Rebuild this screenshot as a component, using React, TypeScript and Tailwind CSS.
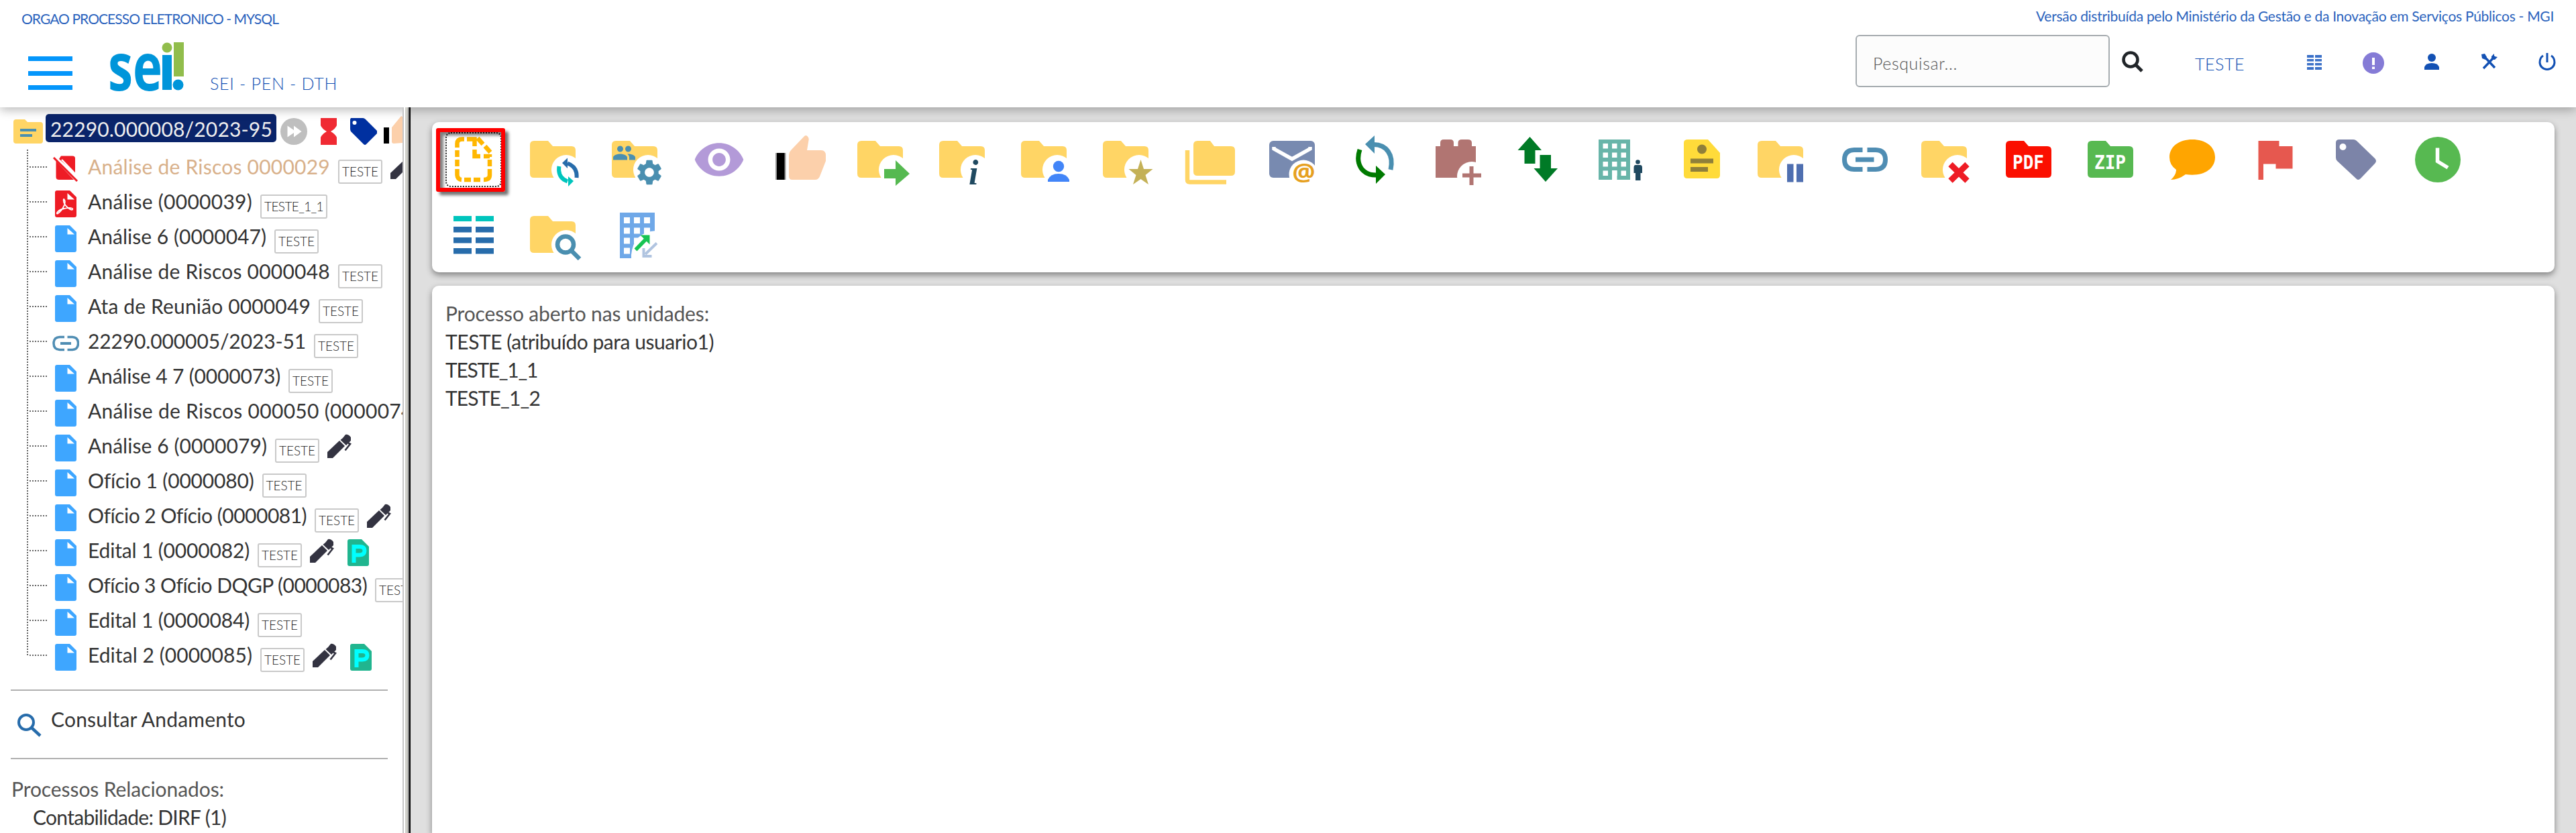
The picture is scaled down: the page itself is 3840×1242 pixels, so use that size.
import { useLayoutEffect, useRef, useState } from "react";
import type { ReactNode } from "react";
import { MdSettings, MdGroup, MdVisibility } from "react-icons/md";

/* Text run whose tracking is adjusted so that it fills a given width. */
function Run({ w, className = "", children }: { w: number; className?: string; children: string }) {
  const ref = useRef<HTMLSpanElement>(null);
  const [tracking, setTracking] = useState(0);
  useLayoutEffect(() => {
    if (ref.current) setTracking((w - ref.current.getBoundingClientRect().width) / children.length);
  }, []);
  return (
    <span ref={ref} className={`whitespace-pre shrink-0 ${className}`} style={{ letterSpacing: tracking }}>
      {children}
    </span>
  );
}

const FOLDER = "M16 20H37L44 28H72Q78 28 78 34V75H16Q10 75 10 69V26Q10 20 16 20Z";
const FOLDER_TYPE = "M20 20H41L48 28H76Q82 28 82 34V69Q82 75 76 75H20Q14 75 14 69V26Q14 20 20 20Z";
const STEEL = "#4a8fb0";

function Icon({ children }: { children: ReactNode }) {
  return (
    <svg viewBox="0 0 96 96" className="block size-[96px] shrink-0 overflow-visible">
      {children}
    </svg>
  );
}

function FolderIcon({ children }: { children: ReactNode }) {
  return (
    <Icon>
      <path d={FOLDER} fill="#ffd565" />
      <circle cx="64" cy="63" r="22" fill="#fff" />
      <rect x="46" y="62" width="40" height="26" fill="#fff" />
      {children}
    </Icon>
  );
}

function Windows({ xs, ys, s }: { xs: number[]; ys: number[]; s: number }) {
  return (
    <>
      {ys.map((y, j) => xs.map((x, i) => <rect key={`${i}-${j}`} x={x} y={y} width={s} height={s} fill="#fff" />))}
    </>
  );
}

function Toolbar() {
  return (
    <div className="flex h-[224px] flex-wrap content-start gap-x-[26px] gap-y-4 rounded-[10px] bg-white pl-[14px] pr-[80px] pt-2 shadow-[0_4px_10px_rgba(0,0,0,0.42)]">
      <div className="relative">
        <Icon>
          <g fill="none" stroke="#ffb700" strokeWidth="6.500">
            <path d="M23.5 30V24Q23.5 17.500 31 17.500H34" />
            <path d="M38 17.500H49.500V28M49.500 33V43H58M63 43H72M54 16L62 25M65 28L73 37" />
            <path d="M23.500 34V44M23.500 48V58M23.500 62V71Q24 77.500 30 78" />
            <path d="M72 40V44M72 48V58M72 62V71Q72 78 63 78M34 78H44M48 78H58" />
          </g>
        </Icon>
        <div className="absolute left-[6px] top-[7px] h-[82px] w-[84px] rounded-[8px] border-2 border-dotted border-[#222]" />
        <div className="absolute -left-2 top-px h-[95px] w-[103px] rounded-[3px] border-[6px] border-[#ff0000] shadow-[5px_5px_4px_rgba(0,0,0,0.55),inset_5px_5px_4px_rgba(0,0,0,0.5)]" />
      </div>

      <FolderIcon>
        <path d="M79.500 75Q81 59 66 53.500" fill="none" stroke="#276cab" strokeWidth="6" />
        <path d="M58 53L66 45.500V61Z" fill="#276cab" />
        <path d="M53.500 58Q51 75 66 80.500" fill="none" stroke="#00c5bd" strokeWidth="6" />
        <path d="M75 80L67 73V88Z" fill="#00c5bd" />
      </FolderIcon>

      <FolderIcon>
        <MdGroup x="10.500" y="20" size={36} color={STEEL} />
        <circle cx="66" cy="67" r="22" fill="#fff" />
        <MdSettings x="43.200" y="44.200" size={45.6} color={STEEL} />
      </FolderIcon>

      <Icon>
        <MdVisibility x="8.400" y="8.400" size={79.2} color="#b39ad8" />
      </Icon>

      <Icon>
        <rect x="10" y="38" width="15.500" height="40" fill="#999" />
        <rect x="12" y="38" width="11.500" height="40" />
        <path d="M35 78Q30 78 30 73V41Q30 37 33 34L53 13Q55.500 11 57.500 13L59 15Q60 17 59.500 19L57 34H78Q85 34 85 42V50L76 73Q74 78 69 78Z" fill="#fcd0ab" />
      </Icon>

      <FolderIcon>
        <path d="M50 62H67V49L88 69L67 87V76H50Z" fill="#55b950" />
      </FolderIcon>

      <FolderIcon>
        <text x="54" y="85" className="font-['Liberation_Serif'] text-[52px] font-bold italic" fill="#1f4960">i</text>
      </FolderIcon>

      <FolderIcon>
        <circle cx="66" cy="58" r="8.200" fill="#4285f8" />
        <path d="M50 81V78Q54 69 66 69Q78 69 82 78V81Z" fill="#4285f8" />
      </FolderIcon>

      <FolderIcon>
        <path d="M66.500 48L71 62H84.500L73.500 71L78 85L66.500 77L55 85L59.500 71L48.500 62H62Z" fill="#c4b157" />
      </FolderIcon>

      <Icon>
        <path d="M29 20H48L54 28H79Q85 28 85 34V66Q85 72 79 72H29Q23 72 23 66V26Q23 20 29 20Z" fill="#ffd565" />
        <path d="M14 34V78Q14 81.500 17.500 81.500H72" fill="none" stroke="#ffd565" strokeWidth="6.500" />
      </Icon>

      <Icon>
        <rect x="14" y="20" width="68" height="55" rx="6" fill="#788ab0" />
        <path d="M21 29V32L48 47L75 32V29" fill="none" stroke="#fff" strokeWidth="5.500" />
        <circle cx="65" cy="70" r="21.500" fill="#fff" />
        <rect x="46" y="66" width="40" height="20" fill="#fff" />
        <text x="48.500" y="80" textLength="34" lengthAdjust="spacingAndGlyphs" className="font-['Noto_Sans'] text-[36px] font-bold" fill="#e6a020">@</text>
      </Icon>

      <Icon>
        <path d="M48 25.500C66 25.500 78 40 73 63" fill="none" stroke={STEEL} strokeWidth="7" />
        <path d="M35 25L49 12V39Z" fill={STEEL} />
        <path d="M27 33C20 54 30 71 51 71" fill="none" stroke="#007a00" strokeWidth="7" />
        <path d="M65 70L51 57V84Z" fill="#007a00" />
      </Icon>

      <Icon>
        <path d="M18 28H25V23Q25 18 30 18H40Q45 18 45 23V28H51.500V23Q51.500 18 57 18H66Q72 18 72 23V28H78V75H18Z" fill="#b17572" />
        <circle cx="72" cy="73" r="22" fill="#fff" />
        <path d="M58 71.500H86M71.500 58V86" stroke="#b17572" strokeWidth="6" />
      </Icon>

      <Icon>
        <path d="M36.500 14L54 34H44.500V54H28.500V34H18.500ZM51.500 41H68V61H78L60 81L42.500 61H51.500Z" fill="#007a26" />
      </Icon>

      <Icon>
        <rect x="17" y="18" width="47" height="60" fill="#68b5a9" />
        <Windows xs={[23.5, 37, 50.5]} ys={[24, 37.5, 51, 64.5]} s={7.5} />
        <rect x="37" y="64" width="7.500" height="14" fill="#fff" />
        <circle cx="75.500" cy="51.500" r="3.300" fill="#1f4960" />
        <path d="M72 56H79Q82 56 82 60V68H79.500V79H72V68H69.500V60Q69.500 56 72 56Z" fill="#1f4960" />
      </Icon>

      <Icon>
        <path d="M28 18H58L76 38V71Q76 76 71 76H27Q22 76 22 71V23Q22 18 28 18Z" fill="#ffdb3a" />
        <circle cx="49" cy="32.500" r="7" fill="#8f7f3a" />
        <path d="M32 50H66M32 62.500H58" stroke="#8f7f3a" strokeWidth="7" />
      </Icon>

      <FolderIcon>
        <path d="M54 54.500H63.500V81.500H54ZM68 54.500H78V81.500H68Z" fill="#4f6fb0" />
      </FolderIcon>

      <Icon>
        <path d="M44.500 33.500H32Q17.500 34 17.500 48Q17.500 62 32 62.500H44.500M51.500 33.500H64Q78.500 34 78.500 48Q78.500 62 64 62.500H51.500" fill="none" stroke="#4f8db3" strokeWidth="7" />
        <rect x="34" y="44.500" width="27.500" height="7" fill="#4f8db3" />
      </Icon>

      <FolderIcon>
        <path d="M53.500 55L78.500 79.500M78.500 55L53.500 79.500" stroke="#ee1c25" strokeWidth="9" />
      </FolderIcon>

      <Icon>
        <path d={FOLDER_TYPE} fill="#fb0f00" />
        <text x="24" y="62" textLength="47" lengthAdjust="spacingAndGlyphs" className="font-['DejaVu_Sans_Mono'] text-[28px] font-bold" fill="#fff">PDF</text>
      </Icon>

      <Icon>
        <path d={FOLDER_TYPE} fill="#57b951" />
        <text x="24" y="62" textLength="47" lengthAdjust="spacingAndGlyphs" className="font-['DejaVu_Sans_Mono'] text-[28px] font-bold" fill="#fff">ZIP</text>
      </Icon>

      <Icon>
        <path d="M48 18C67 18 82 28 82 44.500C82 61 66 74 38 70Q27 78 16 78Q24 71 24 63Q14 56 14 44.500C14 28 29 18 48 18Z" fill="#ffa500" />
      </Icon>

      <Icon>
        <path d="M24.500 20H55.500V28H75.500V61.500H50.500V54.500H32V78H24.500Z" fill="#e6584f" />
      </Icon>

      <Icon>
        <path d="M23 18H44Q47 18 49 20L76 46Q80 50 76 54L55 76Q51 80 48 76L20 50Q18 48 18 45V23Q18 18 23 18Z" fill="#7c84a8" />
        <circle cx="28.500" cy="29" r="5" fill="#fff" />
      </Icon>

      <Icon>
        <circle cx="48" cy="48" r="34" fill="#57b951" />
        <path d="M47.500 30.500V50.500L63 60" fill="none" stroke="#fff" strokeWidth="5.500" />
      </Icon>

      <Icon>
        <path d="M18 20H45V28H18ZM51 20H78V28H51Z" fill="#00c5bd" />
        <path d="M18 36H45V44.500H18ZM51 36H78V44.500H51ZM18 52H45V60.500H18ZM51 52H78V60.500H51ZM18 68H45V76.500H18ZM51 68H78V76.500H51Z" fill="#276cab" />
      </Icon>

      <FolderIcon>
        <circle cx="63" cy="62.500" r="12" fill="none" stroke={STEEL} strokeWidth="6.500" />
        <path d="M71 71L84 84" stroke={STEEL} strokeWidth="6.500" />
      </FolderIcon>

      <Icon>
        <rect x="22" y="15" width="52" height="68" fill="#6fa8e8" />
        <Windows xs={[28, 43, 58]} ys={[22, 37.5, 52.5, 67.5]} s={9} />
        <path d="M39 84V78Q42 44 76 42V84Z" fill="#fff" />
        <path d="M45.500 70.500L62 53.500" stroke="#17c452" strokeWidth="5.500" />
        <path d="M52.500 48.500H66.500V62.500Z" fill="#17c452" />
        <path d="M77 60.500L60 77" stroke="#b0c4e0" strokeWidth="4" />
        <path d="M55.500 68V82H69.500V78H59.500V68Z" fill="#b0c4e0" />
      </Icon>
    </div>
  );
}

function DocIcon({ kind = "doc" }: { kind?: string }) {
  if (kind === "cancelled")
    return (
      <svg viewBox="0 0 40 40" className="size-10 overflow-visible">
        <path d="M13 0.500H30Q34 0.500 34 4V26L10 5ZM5.500 8L32 36H10Q5.500 36 5.500 32Z" fill="#ee1c25" />
        <path d="M14 6L34 27" stroke="#fff" strokeWidth="2.500" />
        <path d="M2 3L37 38" stroke="#ee1c25" strokeWidth="3" />
      </svg>
    );
  if (kind === "link")
    return (
      <svg viewBox="0 0 40 40" className="size-10 -translate-y-[3px]">
        <path d="M18 13.500H11Q2 14 2 23Q2 32 11 32.500H18M22.500 13.500H30Q38.500 14 38.500 23Q38.500 32 30 32.500H22.500" fill="none" stroke="#4f8db3" strokeWidth="3.500" />
        <path d="M12 23H28" stroke="#4f8db3" strokeWidth="4" />
      </svg>
    );
  const color = kind === "pdf" ? "#ee1c25" : "#3ea6ff";
  return (
    <svg viewBox="0 0 40 40" className="size-10">
      <path d="M7 0H26L36 10V37Q36 40 33 40H7Q4 40 4 37V3Q4 0 7 0Z" fill={color} />
      <path d="M22.500 4V13.500H33Z" fill="#fff" />
      {kind === "pdf" && (
        <path d="M17 13C22 16 16 29 8 34.500C5 36 7 29 18 27C25 25 32 26 30 28.500C28 30 19 24 17 17Q16 12 18 13" fill="none" stroke="#fff" strokeWidth="1.800" />
      )}
    </svg>
  );
}

function Pen() {
  return (
    <svg viewBox="0 0 36 36" className="ml-3 h-9 w-9 shrink-0">
      <path d="M0 36V27L18 10L26 18L8 36Z" fill="#333341" />
      <path d="M19.500 9L23 6L27 1Q31 0 35 5V10L28 17Z" fill="#333341" />
      <path d="M31 13.500L34 15L26.500 24.500" fill="none" stroke="#333341" strokeWidth="2.600" />
    </svg>
  );
}

function PIcon() {
  return (
    <svg viewBox="0 0 32 40" className="ml-5 h-10 w-8 shrink-0">
      <path d="M3 0H21L32 11V37Q32 40 29 40H3Q0 40 0 37V3Q0 0 3 0Z" fill="#20b58f" />
      <path d="M9.500 35V11H18Q25.500 11 25.500 17T18 23.500H11" fill="none" stroke="#00ffff" strokeWidth="6" />
    </svg>
  );
}

type Doc = { text: string; w: number; kind?: string; badge?: string; bw?: number; pen?: boolean; p?: boolean };

const DOCS: Doc[] = [
  { text: "Análise de Riscos 0000029", w: 361, kind: "cancelled", badge: "TESTE", bw: 67, pen: true },
  { text: "Análise (0000039)", w: 245, kind: "pdf", badge: "TESTE_1_1", bw: 100 },
  { text: "Análise 6 (0000047)", w: 266, badge: "TESTE" },
  { text: "Análise de Riscos 0000048", w: 361, badge: "TESTE" },
  { text: "Ata de Reunião 0000049", w: 332, badge: "TESTE" },
  { text: "22290.000005/2023-51", w: 325, kind: "link", badge: "TESTE" },
  { text: "Análise 4 7 (0000073)", w: 287, badge: "TESTE" },
  { text: "Análise de Riscos 000050 (0000074)", w: 493 },
  { text: "Análise 6 (0000079)", w: 267, badge: "TESTE", pen: true },
  { text: "Ofício 1 (0000080)", w: 247, badge: "TESTE" },
  { text: "Ofício 2 Ofício (0000081)", w: 325, badge: "TESTE", pen: true },
  { text: "Edital 1 (0000082)", w: 241, badge: "TESTE", pen: true, p: true },
  { text: "Ofício 3 Ofício DQGP (0000083)", w: 415, badge: "TESTE" },
  { text: "Edital 1 (0000084)", w: 241, badge: "TESTE" },
  { text: "Edital 2 (0000085)", w: 245, badge: "TESTE", pen: true, p: true },
];

function DocRow({ doc, last }: { doc: Doc; last: boolean }) {
  return (
    <div className="flex h-[52px] items-center">
      <div className="flex h-full w-[30px] shrink-0">
        <div
          className={`w-[2px] bg-[repeating-linear-gradient(to_bottom,#666_0_2px,transparent_2px_4px)] ${last ? "h-[27px]" : "h-full"}`}
        />
        <div className="mt-[25px] h-[2px] w-7 bg-[repeating-linear-gradient(to_right,transparent_0_2px,#666_2px_4px)]" />
      </div>
      <div className="ml-2 mt-[6px] w-[53px] shrink-0">
        <DocIcon kind={doc.kind} />
      </div>
      <Run w={doc.w} className={`mb-[3px] ${doc.kind === "cancelled" ? "text-[#d8b08a]" : "text-[#333]"}`}>
        {doc.text}
      </Run>
      {doc.badge && (
        <div
          className={`ml-[12px] mt-[14px] flex h-9 shrink-0 items-center justify-center rounded-[3px] border-2 border-[#c9c9c9] text-[19px] font-light text-[#222] ${doc.bw === 100 ? "w-[100px]" : "w-[66px]"}`}
        >
          <Run w={doc.bw === 100 ? 88 : 54}>{doc.badge}</Run>
        </div>
      )}
      {doc.pen && <Pen />}
      {doc.p && (
        <div className="mt-[6px]">
          <PIcon />
        </div>
      )}
    </div>
  );
}

function Sidebar() {
  return (
    <aside className="w-[600px] shrink-0 overflow-hidden bg-white text-[30px] leading-[52px]">
      <div className="flex h-[63px] items-start pl-5 pt-[10px]">
        <svg viewBox="0 0 44 36" className="mt-2 h-9 w-11 shrink-0">
          <path d="M4 0H17L21 4H40Q44 4 44 8V32Q44 36 40 36H4Q0 36 0 32V4Q0 0 4 0Z" fill="#ffd565" />
          <path d="M10 16H34M10 24H28" stroke={STEEL} strokeWidth="4" />
        </svg>
        <div className="ml-1 flex h-[42px] w-[344px] shrink-0 items-center rounded-[5px] bg-[#0a246a] pl-[7px] pt-[1px] text-[#eee]">
          <Run w={331}>22290.000008/2023-95</Run>
        </div>
        <div className="ml-[6px] mt-[6px] flex shrink-0">
          <svg viewBox="0 0 40 40" className="size-10 shrink-0">
            <circle cx="20" cy="20" r="20" fill="#bfbfbf" />
            <path d="M10.500 11.500L20 18V11.500L31.500 20L20 28.500V22L10.500 28.500Z" fill="#fff" />
          </svg>
          <svg viewBox="0 0 24 40" className="ml-5 h-10 w-6 shrink-0">
            <path d="M0 0H24V11Q22 16 15 20Q22 24 24 29V40H0V29Q2 24 9 20Q2 16 0 11Z" fill="#f02a33" />
          </svg>
          <svg viewBox="0 0 40 40" className="ml-5 size-10 shrink-0">
            <path d="M1 0H19Q21 0 23 2L40 19V23L24 39Q22 41 20 39L1 20Q0 18 0 16V2Z" fill="#0030a0" />
            <circle cx="6.500" cy="7" r="3" fill="#fff" />
          </svg>
          <svg viewBox="0 0 44 44" className="-mt-1 ml-[10px] h-11 w-11 shrink-0">
            <rect x="0" y="18" width="8" height="24" />
            <path d="M15 42Q12 42 12 39V18L26 1Q31 3 30 8L28 16H40V40Z" fill="#fcd0ab" />
          </svg>
        </div>
      </div>
      <div className="flex flex-col pl-10">
        {DOCS.map((doc, i) => (
          <DocRow key={i} doc={doc} last={i === DOCS.length - 1} />
        ))}
      </div>
      <div className="ml-4 mt-[25px] flex h-[104px] w-[562px] items-start border-y-2 border-[#b0b0b0] pl-[10px] pt-[33px]">
        <svg viewBox="0 0 36 36" className="size-9 overflow-visible">
          <circle cx="13" cy="14" r="11" fill="none" stroke="#276cab" strokeWidth="4" />
          <path d="M21 22L34 34" stroke="#276cab" strokeWidth="4.500" />
        </svg>
        <Run w={290} className="-mt-[17px] ml-[14px] text-[#333]">Consultar Andamento</Run>
      </div>
      <div className="flex flex-col items-start pl-[17px] pt-[23px] leading-[42px]">
        <div className="h-[42px]"><Run w={317} className="text-[#555]">Processos Relacionados:</Run></div>
        <div className="h-[42px] pl-8"><Run w={288} className="text-[#333]">Contabilidade: DIRF (1)</Run></div>
      </div>
    </aside>
  );
}

function Header() {
  return (
    <header className="relative z-10 flex h-[160px] justify-between bg-white text-[#2b63bd] shadow-[0_4px_14px_rgba(0,0,0,0.28)]">
      <div className="pl-8 pt-[14px]">
        <div className="flex h-7 items-center text-[21px]"><Run w={383}>ORGAO PROCESSO ELETRONICO - MYSQL</Run></div>
        <div className="flex pl-[10px]">
          <div className="mt-[42px] flex h-[50px] w-[66px] flex-col justify-between">
            <div className="h-[7px] bg-[#0496fb]" />
            <div className="h-[7px] bg-[#0496fb]" />
            <div className="h-[7px] bg-[#0496fb]" />
          </div>
          <svg viewBox="0 0 116 80" className="ml-[52px] mt-[18px] h-[80px] w-[116px] overflow-visible">
            <text x="1" y="75" textLength="81" lengthAdjust="spacingAndGlyphs" className="font-['Open_Sans'] text-[98px] font-bold" fill="#0095da">se</text>
            <rect x="82" y="22" width="14" height="52" fill="#0095da" />
            <circle cx="89" cy="11" r="7.500" fill="#91bd4c" />
            <rect x="99" y="3" width="15" height="51" fill="#91bd4c" />
            <circle cx="105.500" cy="66.500" r="8" fill="#0095da" />
          </svg>
          <div className="ml-[37px] mt-[66px] text-[25px] font-light leading-[32px] text-[#1351b4]"><Run w={190}>SEI - PEN - DTH</Run></div>
        </div>
      </div>
      <div className="flex flex-col items-end pr-[33px] pt-[10px]">
        <div className="flex h-7 items-center text-[21px]"><Run w={772}>Versão distribuída pelo Ministério da Gestão e da Inovação em Serviços Públicos - MGI</Run></div>
        <div className="mt-[14px] flex w-[1041px] items-start">
          <div className="flex h-[78px] w-[379px] shrink-0 items-center rounded-[6px] border-2 border-[#a6acb0] bg-[#fcfcfc] pl-6 pt-2 text-[25px] font-light text-[#555]">
            <Run w={126}>Pesquisar...</Run>
          </div>
          <svg viewBox="0 0 32 32" className="ml-[18px] mt-6 size-8 shrink-0">
            <circle cx="13" cy="13" r="10.500" fill="none" stroke="#212529" strokeWidth="4.500" />
            <path d="M20.500 20.500L30 30" stroke="#212529" strokeWidth="5" />
          </svg>
          <div className="ml-[77px] mt-[27px] w-[73px] shrink-0 text-[25px] font-light leading-[32px] text-[#1351b4]"><Run w={74}>TESTE</Run></div>
          <svg viewBox="0 0 24 24" className="ml-[93px] mt-[29px] size-6 shrink-0">
            <path d="M1 1H11V5H1ZM13 1H23V5H13ZM1 7H11V10.500H1ZM13 7H23V10.500H13ZM1 13H11V16.500H1ZM13 13H23V16.500H13ZM1 19H11V23H1ZM13 19H23V23H13Z" fill="#3a70c8" />
          </svg>
          <svg viewBox="0 0 32 32" className="ml-[60px] mt-[26px] size-8 shrink-0">
            <circle cx="16" cy="16" r="16" fill="#857bd6" />
            <path d="M14 8H18V19H14ZM14 21.500H18V25H14Z" fill="#fff" />
          </svg>
          <svg viewBox="0 0 24 24" className="ml-[59px] mt-7 size-6 shrink-0">
            <circle cx="12" cy="6" r="6" fill="#1351b4" />
            <path d="M1 24V20Q3 14 12 14T23 20V24Z" fill="#1351b4" />
          </svg>
          <svg viewBox="0 0 24 24" className="ml-[62px] mt-7 size-6 shrink-0">
            <path d="M3 3L20 21M20 4L3 22" stroke="#1351b4" strokeWidth="3.400" />
            <path d="M0 1L5 0L8 5L6 9L1 7ZM15 4L19 0V4L24 5L20 9H15Z" fill="#1351b4" />
          </svg>
          <svg viewBox="0 0 26 26" className="ml-[61px] mt-[27px] size-[26px] shrink-0">
            <path d="M7 4Q2 7 2 14A11 10.500 0 0 0 24 14Q24 7 19 4M13 0V14" fill="none" stroke="#1351b4" strokeWidth="3" />
          </svg>
        </div>
      </div>
    </header>
  );
}

export default function App() {
  return (
    <div className="flex h-[1242px] w-[3840px] flex-col overflow-hidden bg-white font-['Lato','Noto_Sans',sans-serif] font-normal">
      <Header />
      <div className="flex min-h-0 flex-1">
        <Sidebar />
        <div className="relative z-20 flex w-3 shrink-0">
          <div className="w-[2px] bg-[#c6c6c6]" />
          <div className="w-[2px] bg-white" />
          <div className="w-1 bg-[#d0d0ca]" />
          <div className="w-[2px] bg-[#808080]" />
          <div className="w-[2px] bg-black" />
        </div>
        <main className="flex flex-1 flex-col gap-5 overflow-hidden bg-[#dfdfdf] pl-8 pr-8 pt-[22px]">
          <Toolbar />
          <div className="flex flex-1 flex-col rounded-t-[10px] bg-white pl-[20px] pt-[20px] text-[30px] leading-[42px] text-[#333] shadow-[0_4px_10px_rgba(0,0,0,0.42)]">
            <div className="h-[42px]"><Run w={393} className="text-[#555]">Processo aberto nas unidades:</Run></div>
            <div className="h-[42px]"><Run w={400}>TESTE (atribuído para usuario1)</Run></div>
            <div className="h-[42px]"><Run w={137}>TESTE_1_1</Run></div>
            <div className="h-[42px]"><Run w={141}>TESTE_1_2</Run></div>
          </div>
        </main>
      </div>
    </div>
  );
}
